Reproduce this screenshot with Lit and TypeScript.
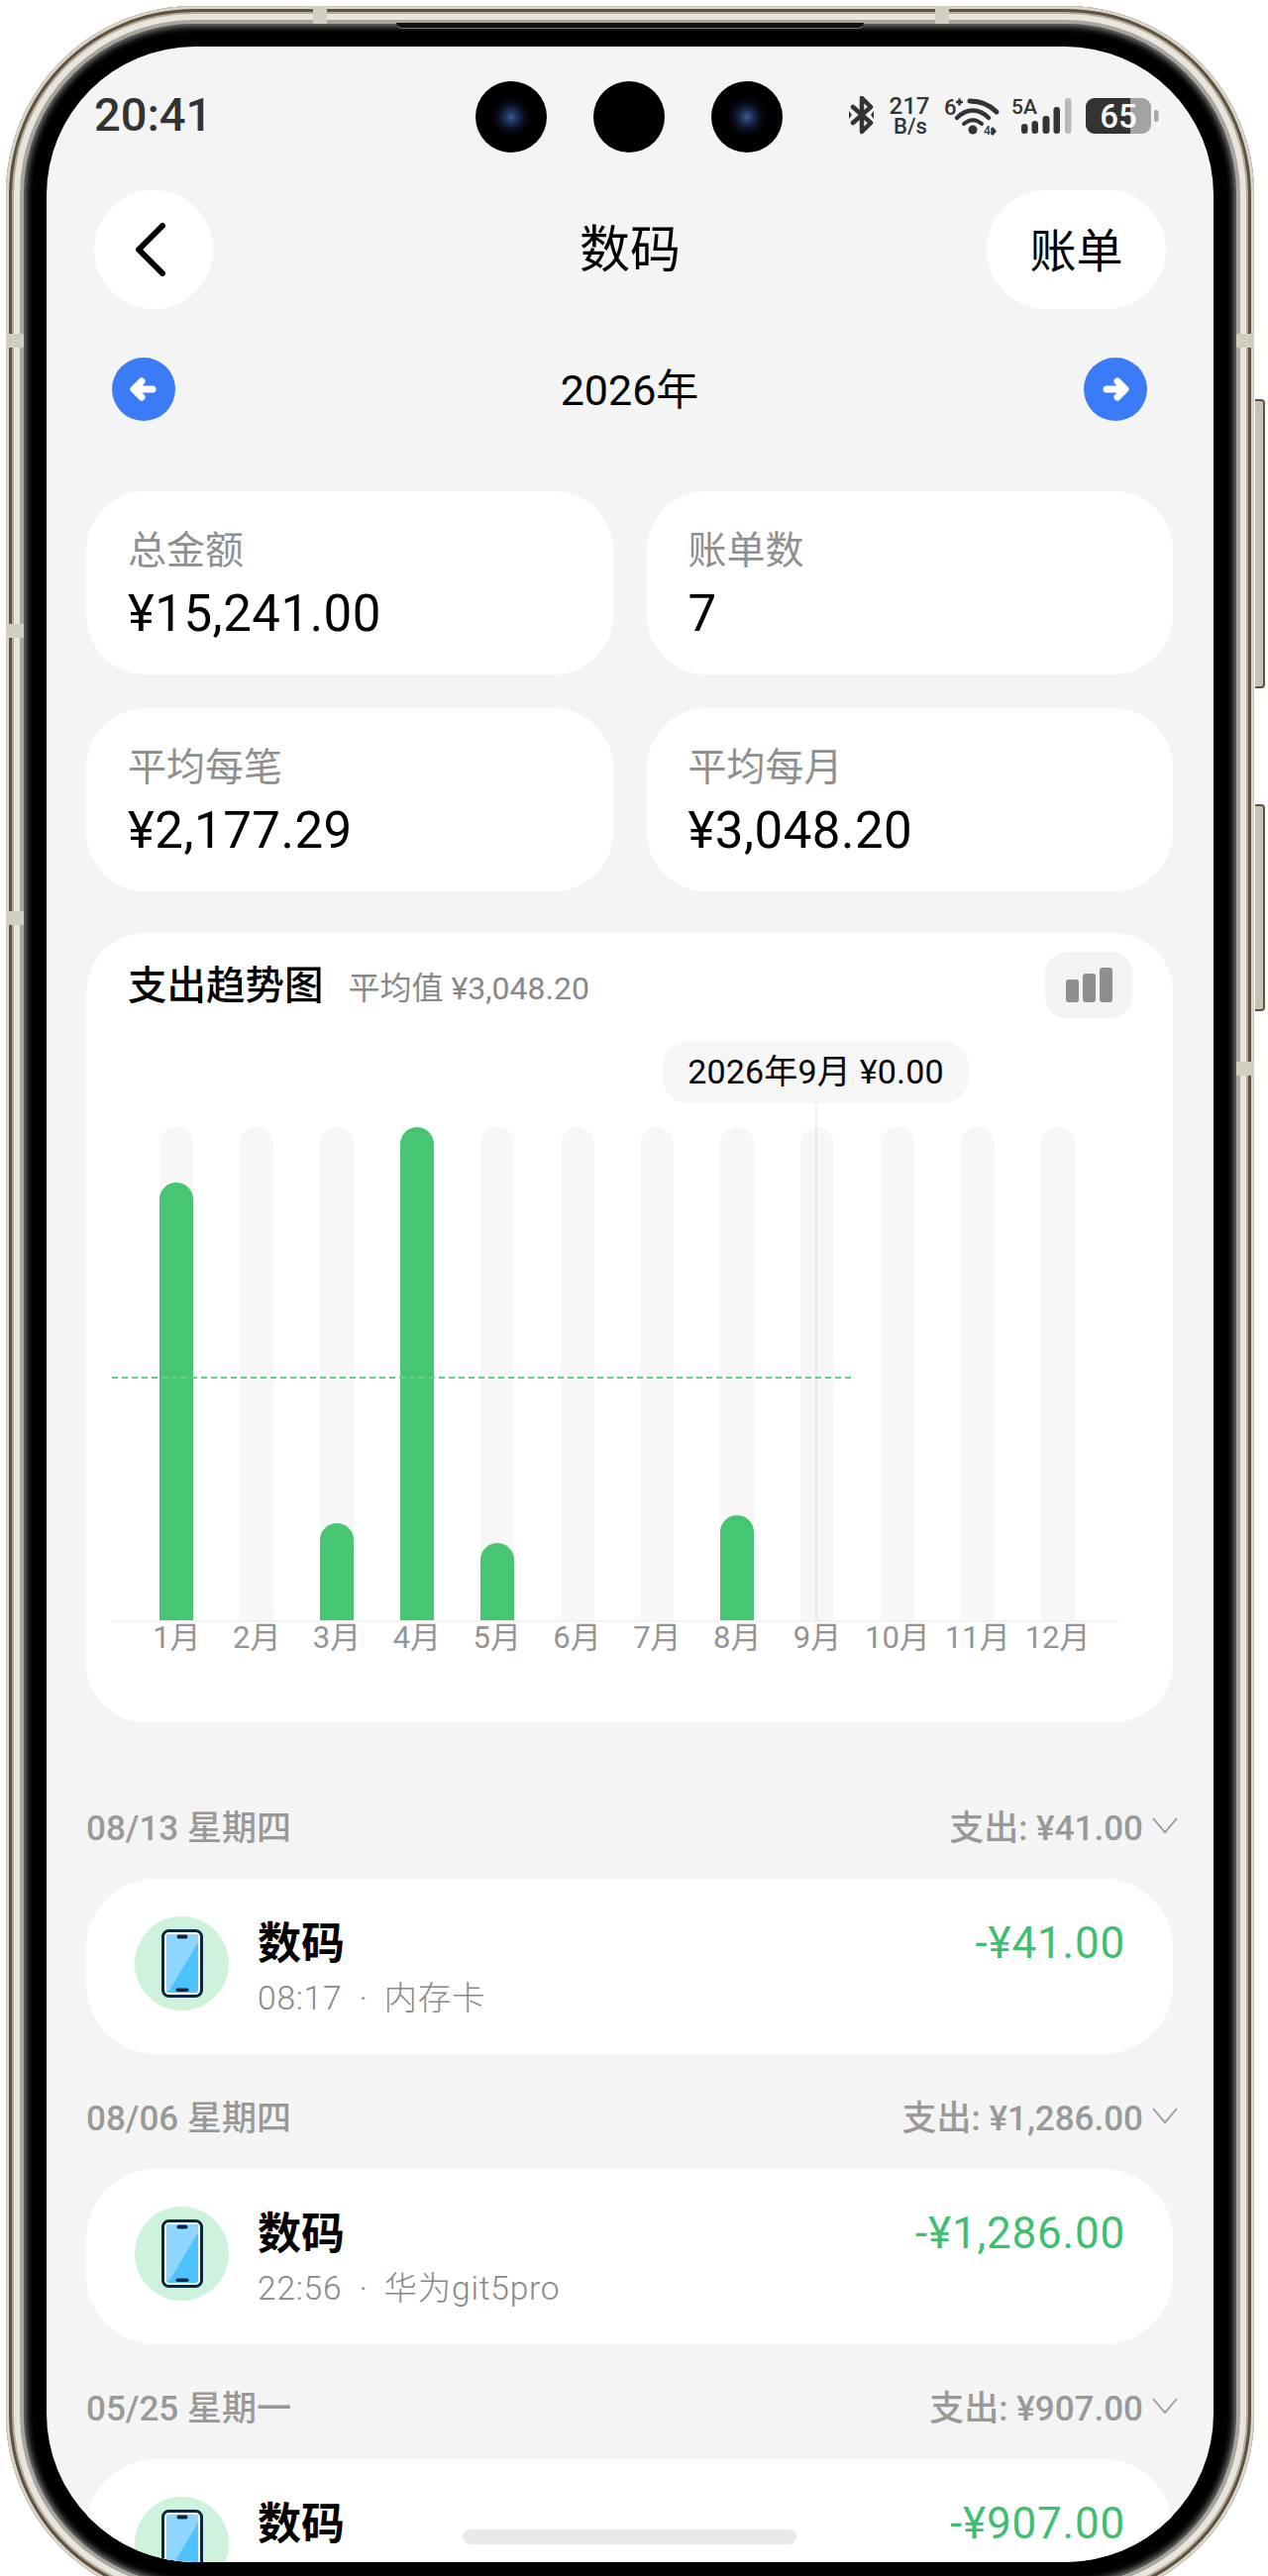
import { LitElement, html, css, svg } from "lit";
import { customElement } from "lit/decorators.js";

const months = [
  { label: "1月", pct: 88.8 },
  { label: "2月", pct: 0 },
  { label: "3月", pct: 19.9 },
  { label: "4月", pct: 100 },
  { label: "5月", pct: 15.8 },
  { label: "6月", pct: 0 },
  { label: "7月", pct: 0 },
  { label: "8月", pct: 21.5 },
  { label: "9月", pct: 0 },
  { label: "10月", pct: 0 },
  { label: "11月", pct: 0 },
  { label: "12月", pct: 0 },
];

const stats = [
  { label: "总金额", value: "¥15,241.00" },
  { label: "账单数", value: "7" },
  { label: "平均每笔", value: "¥2,177.29" },
  { label: "平均每月", value: "¥3,048.20" },
];

const days = [
  { date: "08/13 星期四", total: "支出: ¥41.00", time: "08:17", note: "内存卡", amount: "-¥41.00" },
  { date: "08/06 星期四", total: "支出: ¥1,286.00", time: "22:56", note: "华为git5pro", amount: "-¥1,286.00" },
  { date: "05/25 星期一", total: "支出: ¥907.00", time: "", note: "", amount: "-¥907.00" },
];

const phoneIcon = svg`
  <svg width="42" height="69" viewBox="0 0 42 69">
    <rect x="1.5" y="1.5" width="39" height="66" rx="6" fill="#fff" stroke="#0b2545" stroke-width="3"/>
    <rect x="5" y="5" width="32" height="59" rx="2.5" fill="#4cc2ff"/>
    <path d="M5 7.5a2.5 2.5 0 0 1 2.5-2.5h29.500v8L8 62 5 62z" fill="#8fd6ff"/>
    <rect x="15.500" y="5.500" width="11" height="4" rx="2" fill="#0b2545"/>
    <rect x="14.500" y="59.500" width="13" height="3.500" rx="1.700" fill="#0b2545"/>
  </svg>`;

@customElement("status-icons")
class StatusIcons extends LitElement {
  static styles = css`
    :host {
      display: block;
      width: 316px;
      height: 40px;
    }
    svg {
      display: block;
    }
    text {
      font-family: Roboto, sans-serif;
      font-weight: 500;
      fill: #333;
    }
  `;

  render() {
    // origin of the drawing is x=858, y=97 on the page
    return html`<svg width="316" height="40" viewBox="0 0 316 40">
      <path d="M4 11l18 16-9 9V2l9 9L4 27" fill="none" stroke="#333" stroke-width="4.500" stroke-linejoin="round" stroke-linecap="round"/>
      <path d="M0 15l3 4-3 4zM25 15l-3 4 3 4z" fill="#333"/>
      <text x="61" y="18" text-anchor="middle" font-size="24">217</text>
      <text x="62" y="38" text-anchor="middle" font-size="22">B/s</text>
      <text x="96" y="19" font-size="22">6</text>
      <path d="M108 6h7M111.500 2.500v7" stroke="#333" stroke-width="2.500"/>
      <path d="M122 5c11 0 20 4 27 11" fill="none" stroke="#333" stroke-width="5" stroke-linecap="round"/>
      <path d="M109 22c10-10 22-10 32 0" fill="none" stroke="#333" stroke-width="4.500" stroke-linecap="round"/>
      <path d="M116 28c6-5 12-5 18 0" fill="none" stroke="#333" stroke-width="4" stroke-linecap="round"/>
      <circle cx="125" cy="34" r="4.500" fill="#333"/>
      <text x="136" y="39" font-size="12">4</text>
      <path d="M144 32v7M148 35.500l-2.500-3v6z" stroke="#333" stroke-width="1.500" fill="#333"/>
      <text x="164" y="18" font-size="21">5A</text>
      <rect x="174" y="28" width="6.500" height="10" rx="3.200" fill="#333"/>
      <rect x="184.500" y="25" width="6.500" height="13" rx="3.200" fill="#333"/>
      <rect x="195.500" y="20" width="7" height="18" rx="3.200" fill="#333"/>
      <rect x="206.500" y="11" width="6.500" height="27" rx="3.200" fill="#333"/>
      <rect x="218" y="2" width="6.500" height="36" rx="3.200" fill="#b9b9b9"/>
      <rect x="239" y="2" width="66" height="36" rx="9" fill="#a3a3a3"/>
      <path d="M248 2h36v36h-36a9 9 0 0 1-9-9V11a9 9 0 0 1 9-9z" fill="#333"/>
      <rect x="308" y="14" width="4.500" height="12" rx="2" fill="#a8a8a8"/>
      <text x="272" y="32" text-anchor="middle" font-size="33" style="fill:#fff">65</text>
    </svg>`;
  }
}

@customElement("app-root")
export class AppRoot extends LitElement {
  static styles = css`
    :host {
      display: block;
      position: relative;
      width: 1280px;
      height: 2601px;
      overflow: hidden;
      background: #fff;
      font-family: Roboto, "Noto Sans CJK SC", sans-serif;
      color: #000;
    }

    /* metal band, stripes follow the corner radius */
    .frame {
      position: relative;
      box-sizing: border-box;
      margin: 6px 0 0 6px;
      width: 1260px;
      height: 2622px;
      padding: 18px;
      border-radius: 190px;
      background: #e6e2d9;
      box-shadow:
        inset 0 0 0 1px #cfc9bb,
        inset 0 0 0 3px #dcd7cb,
        inset 0 0 0 6px #5f5240,
        inset 0 0 0 8px #b5ab98,
        inset 0 0 0 14px #e9e5dc,
        inset 0 0 0 18px #a8a59c;
    }
    .btn {
      position: absolute;
      left: 1261px;
      width: 8px;
      background: #c9c1b2;
      border: 2px solid #5f5240;
      border-left: 0;
      border-radius: 0 4px 4px 0;
    }
    .btn.up { top: 397px; height: 288px; }
    .btn.down { top: 806px; height: 205px; }
    .band { position: absolute; background: #d3cec2; }
    .band.h { width: 14px; height: 18px; top: 0; }
    .band.v { width: 18px; height: 14px; }

    .bezel {
      box-sizing: border-box;
      height: 100%;
      padding: 23px;
      border-radius: 172px;
      background: #000;
      position: relative;
      box-shadow: inset 0 0 7px 2px #8b8b8b;
    }
    .speaker {
      position: absolute;
      top: -1px;
      left: 376px;
      width: 472px;
      height: 5px;
      background: #111;
      border-radius: 0 0 12px 12px;
      border-bottom: 1px solid #777;
    }

    .screen {
      position: relative;
      height: 2540px;
      border-radius: 150px;
      background: #f4f4f4;
      overflow: hidden;
    }
    .content {
      padding: 0 41px 0 40px;
    }

    .status {
      display: flex;
      align-items: center;
      height: 145px;
      padding: 0 0 0 8px;
      position: relative;
    }
    .time {
      font-size: 47px;
      font-weight: 500;
      color: #333;
      line-height: 1;
      margin-top: -9px;
    }
    .cams {
      position: absolute;
      left: 393px;
      top: 35px;
      display: flex;
      gap: 47px;
    }
    .cam {
      width: 72px;
      height: 72px;
      border-radius: 50%;
      background: #000;
    }
    .cam.lens {
      background: radial-gradient(circle, #3b5d96 0, #1d3159 12%, #090e1a 26%, #000 40%);
    }
    status-icons {
      position: absolute;
      left: 770px;
      top: 50px;
    }

    .topbar {
      display: grid;
      grid-template-columns: 1fr auto 1fr;
      align-items: center;
      height: 120px;
      padding: 0 7px 0 8px;
    }
    .back {
      width: 120px;
      height: 120px;
      border-radius: 50%;
      background: #fff;
      display: flex;
      align-items: center;
      justify-content: center;
    }
    .back svg {
      margin-right: 6px;
    }
    .topbar h1 {
      margin: 0;
      font-size: 51px;
      font-weight: 400;
      line-height: 1;
    }
    .bills {
      justify-self: end;
      box-sizing: border-box;
      width: 181px;
      height: 120px;
      padding-bottom: 5px;
      border-radius: 60px;
      background: #fff;
      font-size: 47px;
      display: flex;
      align-items: center;
      justify-content: center;
    }

    .yearbar {
      display: flex;
      align-items: center;
      justify-content: space-between;
      height: 64px;
      margin-top: 49px;
      padding: 0 26px 0 26px;
      font-size: 43px;
    }
    .yearbar span {
      margin-top: -6px;
    }
    .circle {
      width: 64px;
      height: 64px;
      border-radius: 50%;
      background: #3b7cf6;
      display: flex;
      align-items: center;
      justify-content: center;
    }

    .stats {
      display: grid;
      grid-template-columns: 1fr 1fr;
      gap: 34px;
      margin-top: 71px;
    }
    .stat {
      box-sizing: border-box;
      height: 185px;
      padding: 37px 42px 0;
      border-radius: 60px;
      background: #fff;
    }
    .stat .label {
      font-size: 39px;
      line-height: 46px;
      color: #8f8f8f;
    }
    .stat .value {
      font-size: 51px;
      line-height: 60px;
      margin-top: 11px;
      letter-spacing: 0.5px;
    }

    .chart {
      position: relative;
      box-sizing: border-box;
      height: 797px;
      margin-top: 42px;
      padding: 19px 41px 0 42px;
      border-radius: 60px;
      background: #fff;
    }
    .chart-head {
      display: flex;
      align-items: center;
      height: 67px;
    }
    .chart-head h2 {
      margin: 2px 0 0;
      font-size: 39.500px;
      font-weight: 500;
      line-height: 1;
    }
    .chart-head .avg {
      margin-left: 25px;
      font-size: 32px;
      color: #888;
      padding-top: 1px;
    }
    .toggle {
      margin-left: auto;
      width: 88px;
      height: 67px;
      border-radius: 22px;
      background: #f3f3f3;
      display: flex;
      align-items: flex-end;
      justify-content: center;
      gap: 4px;
      box-sizing: border-box;
      padding-bottom: 16px;
    }
    .toggle i {
      width: 13px;
      border-radius: 3px;
      background: #8e8e93;
    }

    .plot {
      position: relative;
      margin: 110px 0 0 9px;
      width: 970px;
      display: grid;
      grid-template-columns: repeat(12, 1fr);
    }
    .col {
      display: flex;
      flex-direction: column;
      align-items: center;
    }
    .track {
      position: relative;
      width: 34px;
      height: 499px;
      border-radius: 17px 17px 0 0;
      background: #f7f7f7;
      overflow: hidden;
    }
    .fill {
      position: absolute;
      left: 0;
      right: 0;
      bottom: 0;
      border-radius: 17px 17px 0 0;
      background: #46c673;
    }
    .col span {
      margin-top: -1px;
      font-size: 31px;
      line-height: 36px;
      color: #949494;
      white-space: nowrap;
    }
    .axis {
      position: absolute;
      left: -25px;
      top: 498px;
      width: 1017px;
      height: 2px;
      background: #f3f3f3;
    }
    .avgline {
      position: absolute;
      left: -25px;
      top: 252px;
      width: 746px;
      border-top: 2px dashed #62cd8c;
    }
    .cursor {
      position: absolute;
      left: 685px;
      top: -26px;
      width: 2px;
      height: 525px;
      background: rgba(0, 0, 0, 0.06);
    }
    .tip {
      position: absolute;
      left: 531px;
      top: -87px;
      box-sizing: border-box;
      width: 309px;
      height: 63px;
      border-radius: 26px;
      background: #f6f6f6;
      font-size: 34px;
      letter-spacing: 0.2px;
      line-height: 63px;
      text-align: center;
      white-space: nowrap;
    }

    .days {
      margin-top: 73px;
      display: flex;
      flex-direction: column;
    }
    .day {
      display: flex;
      align-items: center;
      justify-content: space-between;
      height: 60px;
      color: #999;
      font-size: 35px;
      font-weight: 500;
    }
    .day-total {
      display: flex;
      align-items: center;
      gap: 9px;
      margin-right: -5px;
    }
    .day-total svg {
      margin-top: 3px;
    }
    .row {
      box-sizing: border-box;
      display: flex;
      align-items: center;
      height: 177px;
      margin: 25px 0 31px;
      padding: 0 48px 0 49px;
      border-radius: 70px;
      background: #fff;
    }
    .badge {
      flex: none;
      width: 95px;
      height: 95px;
      margin-bottom: 6px;
      border-radius: 50%;
      background: #cff2dc;
      display: flex;
      align-items: center;
      justify-content: center;
    }
    .info {
      margin-left: 29px;
      flex: 1;
    }
    .info b {
      display: block;
      font-size: 44px;
      font-weight: 600;
      line-height: 56px;
      margin-top: 1px;
    }
    .info small {
      display: block;
      min-height: 40px;
      font-size: 33.500px;
      font-weight: 300;
      line-height: 40px;
      letter-spacing: 0.8px;
      color: #888;
      margin-top: 7px;
    }
    .info small i {
      font-style: normal;
      margin: 0 16px 0 17px;
    }
    .amount {
      align-self: flex-start;
      margin-top: 43px;
      font-size: 44px;
      letter-spacing: 0.8px;
      line-height: 44px;
      color: #3fbe72;
    }

    .home {
      position: absolute;
      left: 420px;
      top: 2507px;
      width: 337px;
      height: 15px;
      border-radius: 8px;
      background: #e9e9e9;
    }
  `;

  render() {
    return html`
      <div class="frame">
        <div class="band h" style="left:310px"></div>
        <div class="band h" style="left:938px"></div>
        <div class="band v" style="left:0;top:331px"></div>
        <div class="band v" style="left:0;top:624px"></div>
        <div class="band v" style="left:0;top:914px"></div>
        <div class="band v" style="right:0;top:331px"></div>
        <div class="band v" style="right:0;top:1066px"></div>
        <div class="btn up"></div>
        <div class="btn down"></div>
        <div class="bezel">
          <div class="speaker"></div>
          <div class="screen">
            <div class="content">
              <div class="status">
                <span class="time">20:41</span>
                <div class="cams">
                  <div class="cam lens"></div>
                  <div class="cam"></div>
                  <div class="cam lens"></div>
                </div>
                <status-icons></status-icons>
              </div>

              <div class="topbar">
                <div class="back">
                  <svg width="32" height="54" viewBox="0 0 32 54">
                    <path d="M28 3 4 27l24 24" fill="none" stroke="#000" stroke-width="6" stroke-linecap="round" stroke-linejoin="round"/>
                  </svg>
                </div>
                <h1>数码</h1>
                <div class="bills">账单</div>
              </div>

              <div class="yearbar">
                <div class="circle">
                  <svg width="30" height="28" viewBox="0 0 30 28">
                    <path d="M13 6 5 14l8 8M6 14h18" fill="none" stroke="#fff" stroke-width="7" stroke-linecap="round" stroke-linejoin="round"/>
                  </svg>
                </div>
                <span>2026年</span>
                <div class="circle">
                  <svg width="30" height="28" viewBox="0 0 30 28">
                    <path d="M17 6l8 8-8 8M24 14H6" fill="none" stroke="#fff" stroke-width="7" stroke-linecap="round" stroke-linejoin="round"/>
                  </svg>
                </div>
              </div>

              <div class="stats">
                ${stats.map(
                  (s) => html`<div class="stat">
                    <div class="label">${s.label}</div>
                    <div class="value">${s.value}</div>
                  </div>`
                )}
              </div>

              <div class="chart">
                <div class="chart-head">
                  <h2>支出趋势图</h2>
                  <span class="avg">平均值 ¥3,048.20</span>
                  <div class="toggle">
                    <i style="height:23px"></i>
                    <i style="height:29px"></i>
                    <i style="height:35px"></i>
                  </div>
                </div>
                <div class="plot">
                  ${months.map(
                    (m) => html`<div class="col">
                      <div class="track">
                        ${m.pct ? html`<div class="fill" style="height:${m.pct}%"></div>` : ""}
                      </div>
                      <span>${m.label}</span>
                    </div>`
                  )}
                  <div class="axis"></div>
                  <div class="avgline"></div>
                  <div class="cursor"></div>
                  <div class="tip">2026年9月 ¥0.00</div>
                </div>
              </div>

              <div class="days">
                ${days.map(
                  (d) => html`
                    <div class="day">
                      <span>${d.date}</span>
                      <span class="day-total">
                        ${d.total}
                        <svg width="26" height="17" viewBox="0 0 26 17">
                          <path d="M1 1l12 14L25 1" fill="none" stroke="#999" stroke-width="1.800"/>
                        </svg>
                      </span>
                    </div>
                    <div class="row">
                      <div class="badge">${phoneIcon}</div>
                      <div class="info">
                        <b>数码</b>
                        <small>${d.time ? html`${d.time}<i>·</i>${d.note}` : ""}</small>
                      </div>
                      <div class="amount">${d.amount}</div>
                    </div>
                  `
                )}
              </div>
            </div>
            <div class="home"></div>
          </div>
        </div>
      </div>
    `;
  }
}
